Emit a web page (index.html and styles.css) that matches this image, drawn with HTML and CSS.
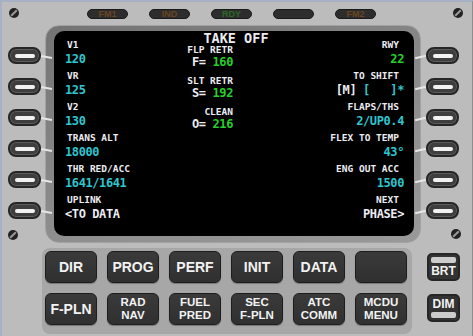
FILE: index.html
```html
<!DOCTYPE html>
<html lang="en">
<head>
    <meta charset="UTF-8">
    <meta name="viewport" content="width=device-width, initial-scale=1.0">
    <title>MCDU - Take Off</title>
    <link rel="stylesheet" href="styles.css">
</head>
<body>
    <div class="mcdu">
        <!-- Corner screws -->
        <span class="screw screw-tl"></span>
        <span class="screw screw-tr"></span>
        <span class="screw screw-bl"></span>
        <span class="screw screw-br"></span>

        <!-- Annunciator lights -->
        <div class="lights">
            <span class="light amber">FM1</span>
            <span class="light amber">IND</span>
            <span class="light green">RDY</span>
            <span class="light"></span>
            <span class="light amber">FM2</span>
        </div>

        <div class="upper">
            <!-- Left line select keys -->
            <div class="lsk-col lsk-left">
                <div class="lsk"></div>
                <div class="lsk"></div>
                <div class="lsk"></div>
                <div class="lsk"></div>
                <div class="lsk"></div>
                <div class="lsk"></div>
            </div>

            <div class="bezel">
                <div class="screen">
                    <div class="col col-left">
                        <div class="field"><div class="label">V1</div><div class="data cyan">120</div></div>
                        <div class="field"><div class="label">VR</div><div class="data cyan">125</div></div>
                        <div class="field"><div class="label">V2</div><div class="data cyan">130</div></div>
                        <div class="field"><div class="label">TRANS ALT</div><div class="data cyan">18000</div></div>
                        <div class="field"><div class="label">THR RED/ACC</div><div class="data cyan">1641/1641</div></div>
                        <div class="field"><div class="label">UPLINK</div><div class="data">&lt;TO DATA</div></div>
                    </div>

                    <div class="col col-center">
                        <div class="title">TAKE OFF</div>
                        <div class="field"><div class="label">FLP RETR</div><div class="data">F= <span class="green">160</span></div></div>
                        <div class="field"><div class="label">SLT RETR</div><div class="data">S= <span class="green">192</span></div></div>
                        <div class="field"><div class="label">CLEAN</div><div class="data">O= <span class="green">216</span></div></div>
                    </div>

                    <div class="col col-right">
                        <div class="field"><div class="label">RWY</div><div class="data green">22</div></div>
                        <div class="field"><div class="label">TO SHIFT</div><div class="data">[M] <span class="cyan">[   ]*</span></div></div>
                        <div class="field"><div class="label">FLAPS/THS</div><div class="data cyan">2/UP0.4</div></div>
                        <div class="field"><div class="label">FLEX TO TEMP</div><div class="data cyan">43°</div></div>
                        <div class="field"><div class="label">ENG OUT ACC</div><div class="data cyan">1500</div></div>
                        <div class="field"><div class="label">NEXT</div><div class="data">PHASE&gt;</div></div>
                    </div>
                </div>
            </div>

            <!-- Right line select keys -->
            <div class="lsk-col lsk-right">
                <div class="lsk"></div>
                <div class="lsk"></div>
                <div class="lsk"></div>
                <div class="lsk"></div>
                <div class="lsk"></div>
                <div class="lsk"></div>
            </div>
        </div>

        <div class="lower">
            <div class="keypad">
                <div class="key">DIR</div>
                <div class="key">PROG</div>
                <div class="key">PERF</div>
                <div class="key">INIT</div>
                <div class="key">DATA</div>
                <div class="key"></div>
                <div class="key">F-PLN</div>
                <div class="key small">RAD<br>NAV</div>
                <div class="key small">FUEL<br>PRED</div>
                <div class="key small">SEC<br>F-PLN</div>
                <div class="key small">ATC<br>COMM</div>
                <div class="key small">MCDU<br>MENU</div>
            </div>

            <div class="brightness">
                <div class="bd-key"><span class="bd-bar"></span>BRT</div>
                <div class="bd-key">DIM<span class="bd-bar"></span></div>
            </div>
        </div>
    </div>
</body>
</html>
```

FILE: styles.css
```css
/* General */
body {
    margin: 0;
    padding: 0;
    background: #fff;
    font-family: 'Liberation Sans', Arial, sans-serif;
}

/* Panel */
.mcdu {
    position: relative;
    width: 473px;
    height: 336px;
    box-sizing: border-box;
    overflow: hidden;
    background: #bcbcbc;
    border-top: 2px solid #a7b1c6;
    border-left: 2px solid #a7b1c6;
    border-right: 1px solid #8d8d8d;
}

/* Screws */
.screw {
    position: absolute;
    width: 10px;
    height: 10px;
    border-radius: 50%;
    background: #222;
}

.screw::after {
    content: "";
    position: absolute;
    left: 1px;
    top: 4px;
    width: 8px;
    height: 2px;
    background: #9a9a9a;
    transform: rotate(-45deg);
}

.screw-tl { left: 7px; top: 6px; }
.screw-tr { right: 9px; top: 6px; }
.screw-bl { left: 6px; top: 228px; }
.screw-br { left: 449px; top: 227px; }

/* Annunciator lights */
.lights {
    display: flex;
    gap: 21px;
    margin-top: 7px;
    padding-left: 85px;
    height: 10px;
}

.light {
    width: 41px;
    height: 10px;
    box-sizing: border-box;
    border-radius: 5px;
    border: 1px solid #1b1b1b;
    background: #2d2d2d;
    font-size: 9px;
    font-weight: bold;
    line-height: 8px;
    text-align: center;
    color: #2d2d2d;
}

.light.amber { color: #6a4620; }
.light.green { color: #2a6a25; }

/* Upper section: keys + screen */
.upper {
    display: flex;
    margin-top: 6px;
}

.lsk-col {
    display: flex;
    flex-direction: column;
    gap: 14px;
    padding-top: 22px;
    box-sizing: border-box;
}

.lsk-left {
    width: 43px;
    padding-left: 6px;
}

.lsk-right {
    width: 50px;
    padding-left: 5px;
}

.lsk {
    position: relative;
    width: 33px;
    height: 17px;
    box-sizing: border-box;
    border-radius: 8px;
    border: 2px solid #262626;
    background: #3e3e3e;
    box-shadow: inset 0 0 0 1px #5c5c5c;
    display: flex;
    align-items: center;
    justify-content: center;
}

/* white bar on the key */
.lsk::before {
    content: "";
    width: 20px;
    height: 4px;
    border-radius: 2px;
    background: #f2f2f2;
}

/* little tick pointing at the screen line */
.lsk::after {
    content: "";
    position: absolute;
    top: 7px;
    width: 11px;
    height: 2px;
    background: #e6e6e6;
}

.lsk-left .lsk::after {
    left: 31px;
    transform: rotate(10deg);
}

.lsk-right .lsk::after {
    right: 31px;
    transform: rotate(-14deg);
}

/* Screen */
.bezel {
    width: 376px;
    height: 218px;
    box-sizing: border-box;
    padding: 5px 6px 6px 8px;
    border-radius: 14px;
    background: linear-gradient(160deg, #747474, #8e8e8e 60%, #999);
    border: 1px solid #a2a2a2;
}

.screen {
    height: 100%;
    box-sizing: border-box;
    padding: 0 10px 0 11px;
    border-radius: 10px;
    background: #000;
    display: grid;
    grid-template-columns: 116px 110px 1fr;
    font-family: 'DejaVu Sans Mono', 'Liberation Mono', monospace;
    font-weight: bold;
    color: #ececf2;
}

.col-left,
.col-right {
    padding-top: 9px;
}

.col-right {
    text-align: right;
}

.col-center {
    padding-top: 2px;
}

.title {
    font-size: 13.5px;
    line-height: 11px;
    margin-bottom: 1px;
    text-align: center;
}

.label {
    font-size: 9.5px;
    line-height: 10px;
    white-space: pre;
}

.data {
    font-size: 12px;
    letter-spacing: -0.4px;
    line-height: 19px;
    white-space: pre;
}

.field {
    margin-bottom: 2px;
}

.col-left .label {
    padding-left: 2px;
}

.col-right .label {
    padding-right: 5px;
}

.col-center .field {
    text-align: right;
    padding-right: 58px;
    margin-bottom: 6px;
}

.col-center .data {
    line-height: 15px;
}

.cyan { color: #2ec6cf; }
.green { color: #27d02a; }

/* Lower section: keypad */
.lower {
    display: flex;
    margin-top: 5px;
    padding-left: 40px;
}

.keypad {
    display: grid;
    grid-template-columns: repeat(6, 52px);
    grid-template-rows: 32px 32px;
    gap: 10px;
    padding: 3px 5px 9px 3px;
    border-radius: 8px;
    background: #a7a7a7;
}

.key {
    display: flex;
    align-items: center;
    justify-content: center;
    text-align: center;
    border-radius: 6px;
    border: 1px solid #1d1d1d;
    background: linear-gradient(#3a3a3a, #303030);
    box-shadow: 0 1px 1px rgba(0, 0, 0, 0.3);
    color: #f2f2f2;
    font-size: 14px;
    font-weight: bold;
}

.key.small {
    font-size: 11.5px;
    line-height: 13px;
}

/* BRT / DIM */
.brightness {
    display: flex;
    flex-direction: column;
    gap: 13px;
    margin-left: 15px;
    padding-top: 5px;
}

.bd-key {
    width: 33px;
    height: 28px;
    box-sizing: border-box;
    border-radius: 5px;
    border: 2px solid #262626;
    background: #333;
    display: flex;
    flex-direction: column;
    align-items: center;
    justify-content: space-between;
    padding: 2px 2px;
    color: #f2f2f2;
    font-size: 12px;
    font-weight: bold;
    line-height: 12px;
}

.bd-bar {
    width: 100%;
    height: 6px;
    border-radius: 2px;
    background: #cdcdcd;
}
```
